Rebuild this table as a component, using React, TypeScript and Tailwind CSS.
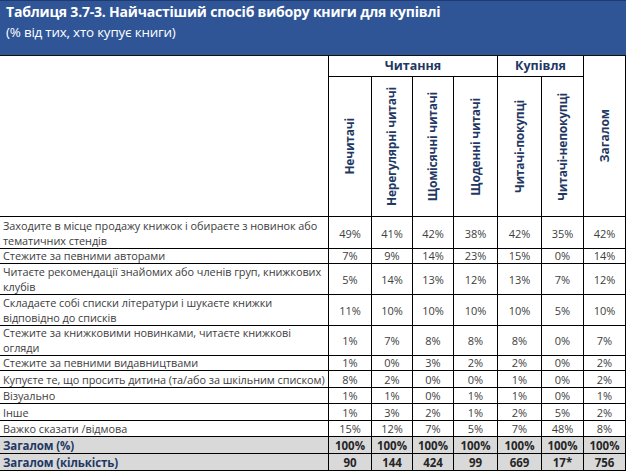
import React from "react";

type Row = { label: string[]; v: string[]; h: number };

const rows: Row[] = [
  { label: ["Заходите в місце продажу книжок і обираєте з новинок або", "тематичних стендів"], v: ["49%", "41%", "42%", "38%", "42%", "35%", "42%"], h: 30 },
  { label: ["Стежите за певними авторами"], v: ["7%", "9%", "14%", "23%", "15%", "0%", "14%"], h: 16 },
  { label: ["Читаєте рекомендації знайомих або членів груп, книжкових", "клубів"], v: ["5%", "14%", "13%", "12%", "13%", "7%", "12%"], h: 31 },
  { label: ["Складаєте собі списки літератури і шукаєте книжки", "відповідно до списків"], v: ["11%", "10%", "10%", "10%", "10%", "5%", "10%"], h: 30 },
  { label: ["Стежите за книжковими новинками, читаєте книжкові", "огляди"], v: ["1%", "7%", "8%", "8%", "8%", "0%", "7%"], h: 30 },
  { label: ["Стежите за певними видавництвами"], v: ["1%", "0%", "3%", "2%", "2%", "0%", "2%"], h: 17 },
  { label: ["Купуєте те, що просить дитина (та/або за шкільним списком)"], v: ["8%", "2%", "0%", "0%", "1%", "0%", "2%"], h: 16 },
  { label: ["Візуально"], v: ["1%", "1%", "0%", "1%", "1%", "0%", "1%"], h: 17 },
  { label: ["Інше"], v: ["1%", "3%", "2%", "1%", "2%", "5%", "2%"], h: 16 },
  { label: ["Важко сказати /відмова"], v: ["15%", "12%", "7%", "5%", "7%", "48%", "8%"], h: 16 },
];

const totals: Row[] = [
  { label: ["Загалом (%)"], v: ["100%", "100%", "100%", "100%", "100%", "100%", "100%"], h: 18 },
  { label: ["Загалом (кількість)"], v: ["90", "144", "424", "99", "669", "17*", "756"], h: 17 },
];

const sub = ["Нечитачі", "Нерегулярні читачі", "Щомісячні читачі", "Щоденні читачі", "Читачі-покупці", "Читачі-непокупці"];

function DataRow({ r, total }: { r: Row; total?: boolean }) {
  return (
    <div className={`grid grid-cols-[329px_43px_41px_41px_44px_44px_42px_42px] ${total ? "bg-[#d9d9d9]" : ""}`} style={{ height: r.h }}>
      <div
        className={`border-r border-b border-black pl-[3px] pt-[1px] flex flex-col justify-center whitespace-nowrap ${
          total ? "text-[11.5px] font-bold text-[#1f3864] leading-[15px] tracking-[-0.1px]" : "text-[10.9px] leading-[15px] text-[#3d3d3d] tracking-[-0.05px]"
        }`}
      >
        {r.label.map((l, j) => (
          <div key={j}>{l}</div>
        ))}
      </div>
      {r.v.map((v, j) => (
        <div
          key={j}
          className={`border-r border-b border-black pt-[1px] flex items-center justify-center leading-[15px] ${
            total ? "text-[11.5px] font-bold text-[#262626]" : "text-[11px] text-[#404040]"
          }`}
        >
          {v}
        </div>
      ))}
    </div>
  );
}

export default function App() {
  return (
    <div className="w-[626px] h-[472px] bg-white overflow-hidden font-['Open_Sans',sans-serif]">
      <div className="h-[56px] bg-[#2f5597] border-t border-t-[#1f3a6e] border-b border-b-[#111] pl-[6px] pt-[2px] text-white">
        <div className="text-[14px] font-bold leading-[18px] tracking-[-0.2px]">Таблиця 3.7-3. Найчастіший спосіб вибору книги для купівлі</div>
        <div className="text-[13.4px] leading-[20px] mt-[1px] tracking-[-0.2px]">(% від тих, хто купує книги)</div>
      </div>
      <div className="grid grid-cols-[329px_43px_41px_41px_44px_44px_42px_42px] grid-rows-[21px_140px]">
        <div className="row-span-2 border-r border-b border-black"></div>
        <div className="col-span-4 border-r border-b border-black flex items-center justify-center text-[12.5px] font-bold text-[#1f3864]">Читання</div>
        <div className="col-span-2 border-r border-b border-black flex items-center justify-center text-[12.5px] font-bold text-[#1f3864]">Купівля</div>
        <div className="row-span-2 border-r border-b border-black flex items-center justify-center">
          <span className="[writing-mode:vertical-rl] rotate-180 text-[12px] font-bold text-[#1f3864] whitespace-nowrap">Загалом</span>
        </div>
        {sub.map((s, i) => (
          <div key={i} className="border-r border-b border-black flex items-center justify-center">
            <span className="[writing-mode:vertical-rl] rotate-180 text-[12px] font-bold text-[#1f3864] whitespace-nowrap tracking-[-0.2px]">{s}</span>
          </div>
        ))}
      </div>
      {rows.map((r, i) => (
        <DataRow key={i} r={r} />
      ))}
      {totals.map((r, i) => (
        <DataRow key={i} r={r} total />
      ))}
    </div>
  );
}
